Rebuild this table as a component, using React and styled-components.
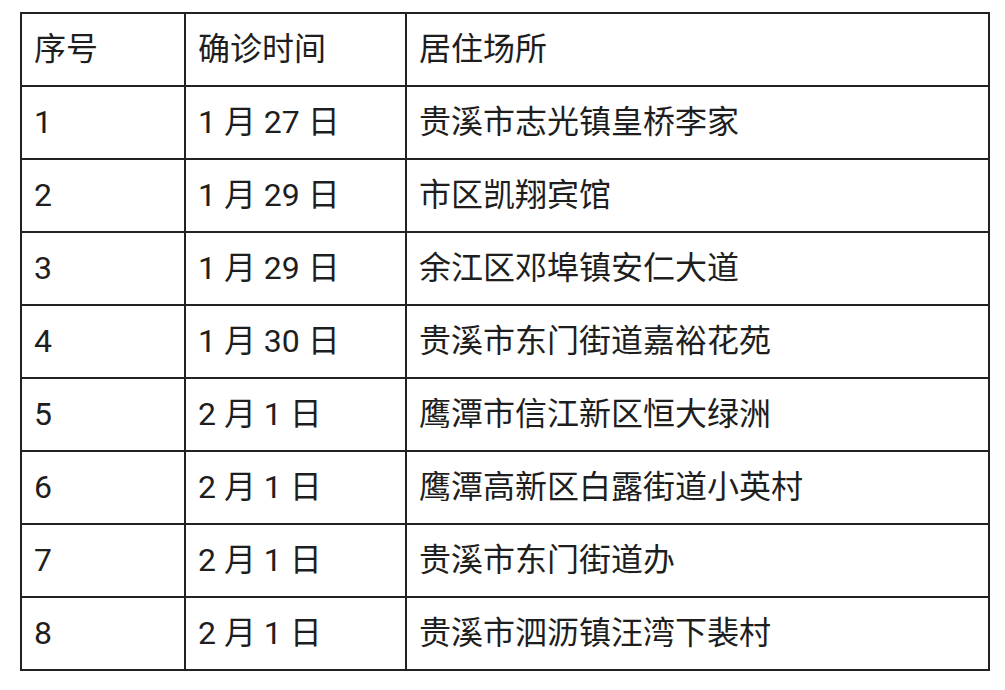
import styled, { createGlobalStyle } from "styled-components";

const rows = [
	["1", "1 月 27 日", "贵溪市志光镇皇桥李家"],
	["2", "1 月 29 日", "市区凯翔宾馆"],
	["3", "1 月 29 日", "余江区邓埠镇安仁大道"],
	["4", "1 月 30 日", "贵溪市东门街道嘉裕花苑"],
	["5", "2 月 1 日", "鹰潭市信江新区恒大绿洲"],
	["6", "2 月 1 日", "鹰潭高新区白露街道小英村"],
	["7", "2 月 1 日", "贵溪市东门街道办"],
	["8", "2 月 1 日", "贵溪市泗沥镇汪湾下裴村"],
];

const GlobalStyle = createGlobalStyle`
	html, body {
		margin: 0;
		background: #fff;
	}
	body {
		font-family: Roboto, "Noto Sans CJK SC", sans-serif;
		color: #1e1e1e;
	}
`;

const Page = styled.div`
	padding: 12px 0 0 20px;
`;

const Table = styled.table`
	border-collapse: collapse;
	table-layout: fixed;
	width: 968px;
`;

const Cell = styled.td`
	border: 2px solid #222;
	height: 69px;
	padding: 0 0 2px 12px;
	font-size: 32px;
	line-height: 1;
	vertical-align: middle;
	white-space: nowrap;
`;

const Col = styled.col`
	width: ${({ $w }) => $w}px;
`;

export default function App() {
	return (
		<Page>
			<GlobalStyle />
			<Table>
				<colgroup>
					<Col $w={164} />
					<Col $w={221} />
					<Col $w={583} />
				</colgroup>
				<tbody>
					<tr>
						<Cell>序号</Cell>
						<Cell>确诊时间</Cell>
						<Cell>居住场所</Cell>
					</tr>
					{rows.map((r) => (
						<tr key={r[0]}>
							{r.map((c, i) => (
								<Cell key={i}>{c}</Cell>
							))}
						</tr>
					))}
				</tbody>
			</Table>
		</Page>
	);
}
